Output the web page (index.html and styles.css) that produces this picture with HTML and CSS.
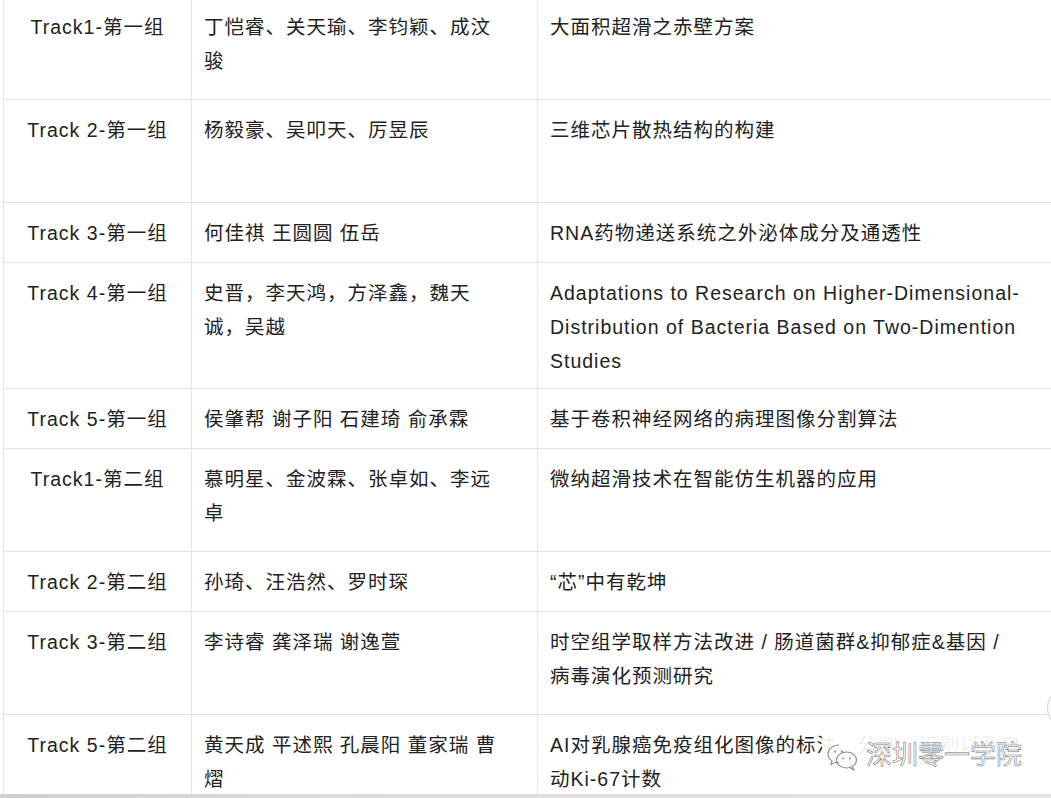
FILE: index.html
```html
<!DOCTYPE html>
<html lang="zh">
<head>
<meta charset="utf-8">
<title>Track 分组</title>
<link rel="stylesheet" href="styles.css">
</head>
<body>
<div class="page">
  <div class="table">
    <div class="row r1">
      <div class="cell c1">Track1-第一组</div>
      <div class="cell c2">丁恺睿、关天瑜、李钧颖、成汶骏</div>
      <div class="cell c3">大面积超滑之赤壁方案</div>
    </div>
    <div class="row r2">
      <div class="cell c1">Track 2-第一组</div>
      <div class="cell c2">杨毅豪、吴叩天、厉昱辰</div>
      <div class="cell c3">三维芯片散热结构的构建</div>
    </div>
    <div class="row r1l">
      <div class="cell c1">Track 3-第一组</div>
      <div class="cell c2">何佳祺 王圆圆 伍岳</div>
      <div class="cell c3">RNA药物递送系统之外泌体成分及通透性</div>
    </div>
    <div class="row r3">
      <div class="cell c1">Track 4-第一组</div>
      <div class="cell c2">史晋，李天鸿，方泽鑫，魏天诚，吴越</div>
      <div class="cell c3">Adaptations to Research on Higher-Dimensional-Distribution of Bacteria Based on Two-Dimention Studies</div>
    </div>
    <div class="row r1l">
      <div class="cell c1">Track 5-第一组</div>
      <div class="cell c2">侯肇帮 谢子阳 石建琦 俞承霖</div>
      <div class="cell c3">基于卷积神经网络的病理图像分割算法</div>
    </div>
    <div class="row r2">
      <div class="cell c1">Track1-第二组</div>
      <div class="cell c2">慕明星、金波霖、张卓如、李远卓</div>
      <div class="cell c3">微纳超滑技术在智能仿生机器的应用</div>
    </div>
    <div class="row r1l">
      <div class="cell c1">Track 2-第二组</div>
      <div class="cell c2">孙琦、汪浩然、罗时琛</div>
      <div class="cell c3">“芯”中有乾坤</div>
    </div>
    <div class="row r2">
      <div class="cell c1">Track 3-第二组</div>
      <div class="cell c2">李诗睿 龚泽瑞 谢逸萱</div>
      <div class="cell c3">时空组学取样方法改进 / 肠道菌群&amp;抑郁症&amp;基因 / 病毒演化预测研究</div>
    </div>
    <div class="row r2 last">
      <div class="cell c1">Track 5-第二组</div>
      <div class="cell c2">黄天成 平述熙 孔晨阳 董家瑞 曹熠</div>
      <div class="cell c3">AI对乳腺癌免疫组化图像的标注、分割、识别以及自动Ki-67计数</div>
    </div>
  </div>

  <div class="watermark">
    <svg class="wm-icon" width="34" height="30" viewBox="0 0 34 30" aria-hidden="true">
      <path d="M13 3C6.9 3 2 7 2 12c0 2.8 1.5 5.2 3.9 6.9L5 22.5l4.2-2.2c1.2.3 2.5.5 3.8.5" fill="none" stroke="#8a8a8a" stroke-width="1.1"/>
      <ellipse cx="20.5" cy="18" rx="10" ry="8" fill="none" stroke="#8a8a8a" stroke-width="1.1"/>
      <path d="M26 24.5l2 3.5-4.6-2.4" fill="none" stroke="#8a8a8a" stroke-width="1.1"/>
      <circle cx="9" cy="9.5" r="1" fill="#8a8a8a"/>
      <circle cx="16" cy="9.5" r="1" fill="#8a8a8a"/>
      <circle cx="17" cy="16.5" r="0.9" fill="#8a8a8a"/>
      <circle cx="24" cy="16.5" r="0.9" fill="#8a8a8a"/>
    </svg>
    <span class="wm-text">深圳零一学院</span>
  </div>

  <div class="float-btn"></div>
  <div class="bottom-bar"></div>
</div>
</body>
</html>
```

FILE: styles.css
```css
html, body {
  margin: 0;
  padding: 0;
  background: #ffffff;
}

body {
  width: 1051px;
  height: 798px;
  overflow: hidden;
  font-family: "Liberation Sans", Arial, "Noto Sans CJK SC", sans-serif;
  font-size: 19.5px;
  letter-spacing: 1px;
  line-height: 34px;
  color: #222222;
}

.page {
  position: relative;
  width: 1051px;
  height: 798px;
  overflow: hidden;
}

.table {
  margin-top: -3px;
  margin-left: 3px;
  width: 1100px;
  border-left: 1px solid #e3e3e3;
}

.row {
  display: grid;
  grid-template-columns: 187px 346px 560px;
  border-bottom: 1px solid #e3e3e3;
  box-sizing: border-box;
}

.row.r1 { height: 103px; }
.row.r2 { height: 103px; }
.row.r1l { height: 60px; }
.row.r3 { height: 126px; }
.row.last { height: 90px; border-bottom: none; }

.cell {
  padding: 13px 12px;
  box-sizing: border-box;
  overflow: hidden;
}

.c1 {
  text-align: center;
  padding-left: 4px;
  padding-right: 4px;
}

.c2 {
  border-left: 1px solid #e6e6e6;
  padding-right: 32px;
}

.c3 {
  border-left: 1px solid #e6e6e6;
  padding-right: 74px;
}

.watermark {
  position: absolute;
  left: 822px;
  top: 734px;
  display: flex;
  align-items: center;
  gap: 6px;
  padding: 0 4px;
  background: rgba(255, 255, 255, 0.93);
}

.wm-icon {
  display: block;
  margin-top: 8px;
}

.wm-text {
  font-family: "Noto Sans CJK SC", sans-serif;
  font-size: 26px;
  letter-spacing: 0;
  line-height: 34px;
  color: #ffffff;
  -webkit-text-stroke: 0.55px #777777;
}

.float-btn {
  position: absolute;
  left: 1047px;
  top: 686px;
  width: 42px;
  height: 42px;
  border-radius: 50%;
  border: 1px solid #d6d6d6;
  background: #fbfbfb;
}

.bottom-bar {
  position: absolute;
  left: 0;
  right: 0;
  bottom: 0;
  height: 4px;
  background: linear-gradient(to right, #cfcfd2 0%, #d8d8dc 20%, #e2dfe0 60%, #e6e2e4 100%);
}
```
